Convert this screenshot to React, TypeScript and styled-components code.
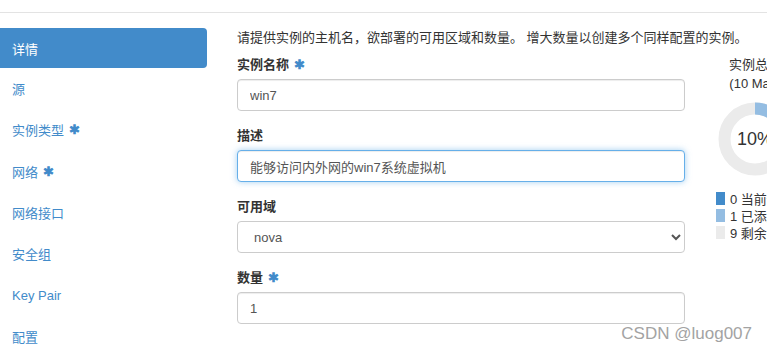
import React from "react";
import styled, { createGlobalStyle } from "styled-components";

const steps = [
	{ label: "详情", required: false },
	{ label: "源", required: false },
	{ label: "实例类型", required: true },
	{ label: "网络", required: true },
	{ label: "网络接口", required: false },
	{ label: "安全组", required: false },
	{ label: "Key Pair", required: false },
	{ label: "配置", required: false },
];

const legend = [
	{ value: 0, text: "当前使用", color: "#428bca" },
	{ value: 1, text: "已添加", color: "#94bde2" },
	{ value: 9, text: "剩余", color: "#ebebeb" },
];

const RADIUS = 30.5;
const CIRC = 2 * Math.PI * RADIUS;

const App: React.FC = () => {
	const used = 0.1;

	return (
		<Page>
			<GlobalStyle />
			<TopRule />
			<Body>
				<Nav aria-label="Steps">
					{steps.map((s, i) => (
						<NavItem key={s.label} $active={i === 0}>
							{s.label}
							{s.required && <Star $inverse={i === 0}>✱</Star>}
						</NavItem>
					))}
				</Nav>

				<Main>
					<Help>
						请提供实例的主机名，欲部署的可用区域和数量。 增大数量以创建多个同样配置的实例。
					</Help>

					<Group>
						<Label>
							实例名称<Star>✱</Star>
						</Label>
						<Input defaultValue="win7" />
					</Group>

					<Group>
						<Label>描述</Label>
						<Input $focused defaultValue="能够访问内外网的win7系统虚拟机" />
					</Group>

					<Group>
						<Label>可用域</Label>
						<Select defaultValue="nova">
							<option value="nova">nova</option>
						</Select>
					</Group>

					<Group>
						<Label>
							数量<Star>✱</Star>
						</Label>
						<Input defaultValue="1" />
					</Group>
				</Main>

				<Quota>
					<QuotaTitle>
						实例总计
						<br />
						(10 Max)
					</QuotaTitle>
					<Donut>
						<svg width="74" height="74" viewBox="0 0 74 74">
							<circle cx="37" cy="37" r={RADIUS} fill="none" stroke="#ebebeb" strokeWidth="12" />
							<circle
								cx="37"
								cy="37"
								r={RADIUS}
								fill="none"
								stroke="#94bde2"
								strokeWidth="12"
								strokeDasharray={`${CIRC * used} ${CIRC}`}
								transform="rotate(-90 37 37)"
							/>
						</svg>
						<Percent>10%</Percent>
					</Donut>
					<Legend>
						{legend.map((l) => (
							<LegendRow key={l.text}>
								<Swatch style={{ background: l.color }} />
								{l.value} {l.text}
							</LegendRow>
						))}
					</Legend>
				</Quota>
			</Body>
			<Watermark>CSDN @luog007</Watermark>
		</Page>
	);
};

export default App;

/* ================= styled ================ */

const GlobalStyle = createGlobalStyle`
	html, body {
		margin: 0;
		padding: 0;
		overflow: hidden;
		background: #fff;
	}
	body {
		font-family: "Liberation Sans", "Noto Sans CJK SC", sans-serif;
		font-size: 13px;
		color: #333;
	}
`;

const Page = styled.div`
	position: relative;
	width: 767px;
	height: 354px;
	overflow: hidden;
`;

const TopRule = styled.div`
	height: 12px;
	border-bottom: 1px solid #e3e3e3;
`;

const Body = styled.div`
	display: flex;
	padding-top: 15px;
`;

const Nav = styled.ul`
	list-style: none;
	margin: 0;
	padding: 0;
	width: 207px;
	flex: none;
`;

const NavItem = styled.li<{ $active?: boolean }>`
	height: ${({ $active }) => ($active ? "40px" : "41.3px")};
	display: flex;
	align-items: center;
	padding-left: 12px;
	border-radius: 0 4px 4px 0;
	font-size: 13px;
	color: ${({ $active }) => ($active ? "#fff" : "#428bca")};
	background: ${({ $active }) => ($active ? "#428bca" : "transparent")};
`;

const Star = styled.span<{ $inverse?: boolean }>`
	color: ${({ $inverse }) => ($inverse ? "#fff" : "#428bca")};
	font-size: 13px;
	font-weight: bold;
	margin-left: 5px;
`;

const Main = styled.div`
	width: 448px;
	margin-left: 30px;
	flex: none;
`;

const Help = styled.p`
	margin: 0 0 8px;
	line-height: 19px;
	white-space: nowrap;
	color: #333;
`;

const Group = styled.div`
	margin-bottom: 15px;
`;

const Label = styled.label`
	display: block;
	font-weight: bold;
	line-height: 19px;
	margin-bottom: 5px;
	color: #333;
`;

const Input = styled.input<{ $focused?: boolean }>`
	display: block;
	box-sizing: border-box;
	width: 100%;
	height: 32px;
	padding: 6px 12px;
	font: inherit;
	color: #555;
	background: #fff;
	border-radius: 4px;
	border: 1px solid ${({ $focused }) => ($focused ? "#66afe9" : "#ccc")};
	box-shadow: ${({ $focused }) =>
		$focused
			? "inset 0 1px 1px rgba(0,0,0,.075), 0 0 6px rgba(102,175,233,.6)"
			: "inset 0 1px 1px rgba(0,0,0,.075)"};
	outline: none;
`;

const Select = styled.select`
	display: block;
	box-sizing: border-box;
	width: 100%;
	height: 32px;
	padding: 0 12px;
	font: inherit;
	color: #555;
	background: #fff;
	border: 1px solid #ccc;
	border-radius: 4px;
	outline: none;
`;

const Quota = styled.div`
	width: 78px;
	margin-left: 31px;
	padding-top: 27px;
	flex: none;
	text-align: center;
`;

const QuotaTitle = styled.div`
	line-height: 19px;
	white-space: nowrap;
	color: #333;
`;

const Donut = styled.div`
	position: relative;
	width: 74px;
	height: 74px;
	margin: 9px auto 0;

	svg {
		display: block;
	}
`;

const Percent = styled.span`
	position: absolute;
	inset: 0;
	display: flex;
	align-items: center;
	justify-content: center;
	font-size: 18px;
	color: #333;
`;

const Legend = styled.div`
	margin-top: 14px;
	text-align: left;
`;

const LegendRow = styled.div`
	display: flex;
	align-items: center;
	gap: 5px;
	height: 17px;
	white-space: nowrap;
	color: #333;
`;

const Swatch = styled.span`
	display: inline-block;
	width: 9px;
	height: 13px;
	flex: none;
`;

const Watermark = styled.div`
	position: absolute;
	right: 15px;
	bottom: 10px;
	font-family: "Liberation Sans", sans-serif;
	font-size: 17px;
	color: #a3a3a3;
	text-shadow: 0 0 2px #fff;
`;
